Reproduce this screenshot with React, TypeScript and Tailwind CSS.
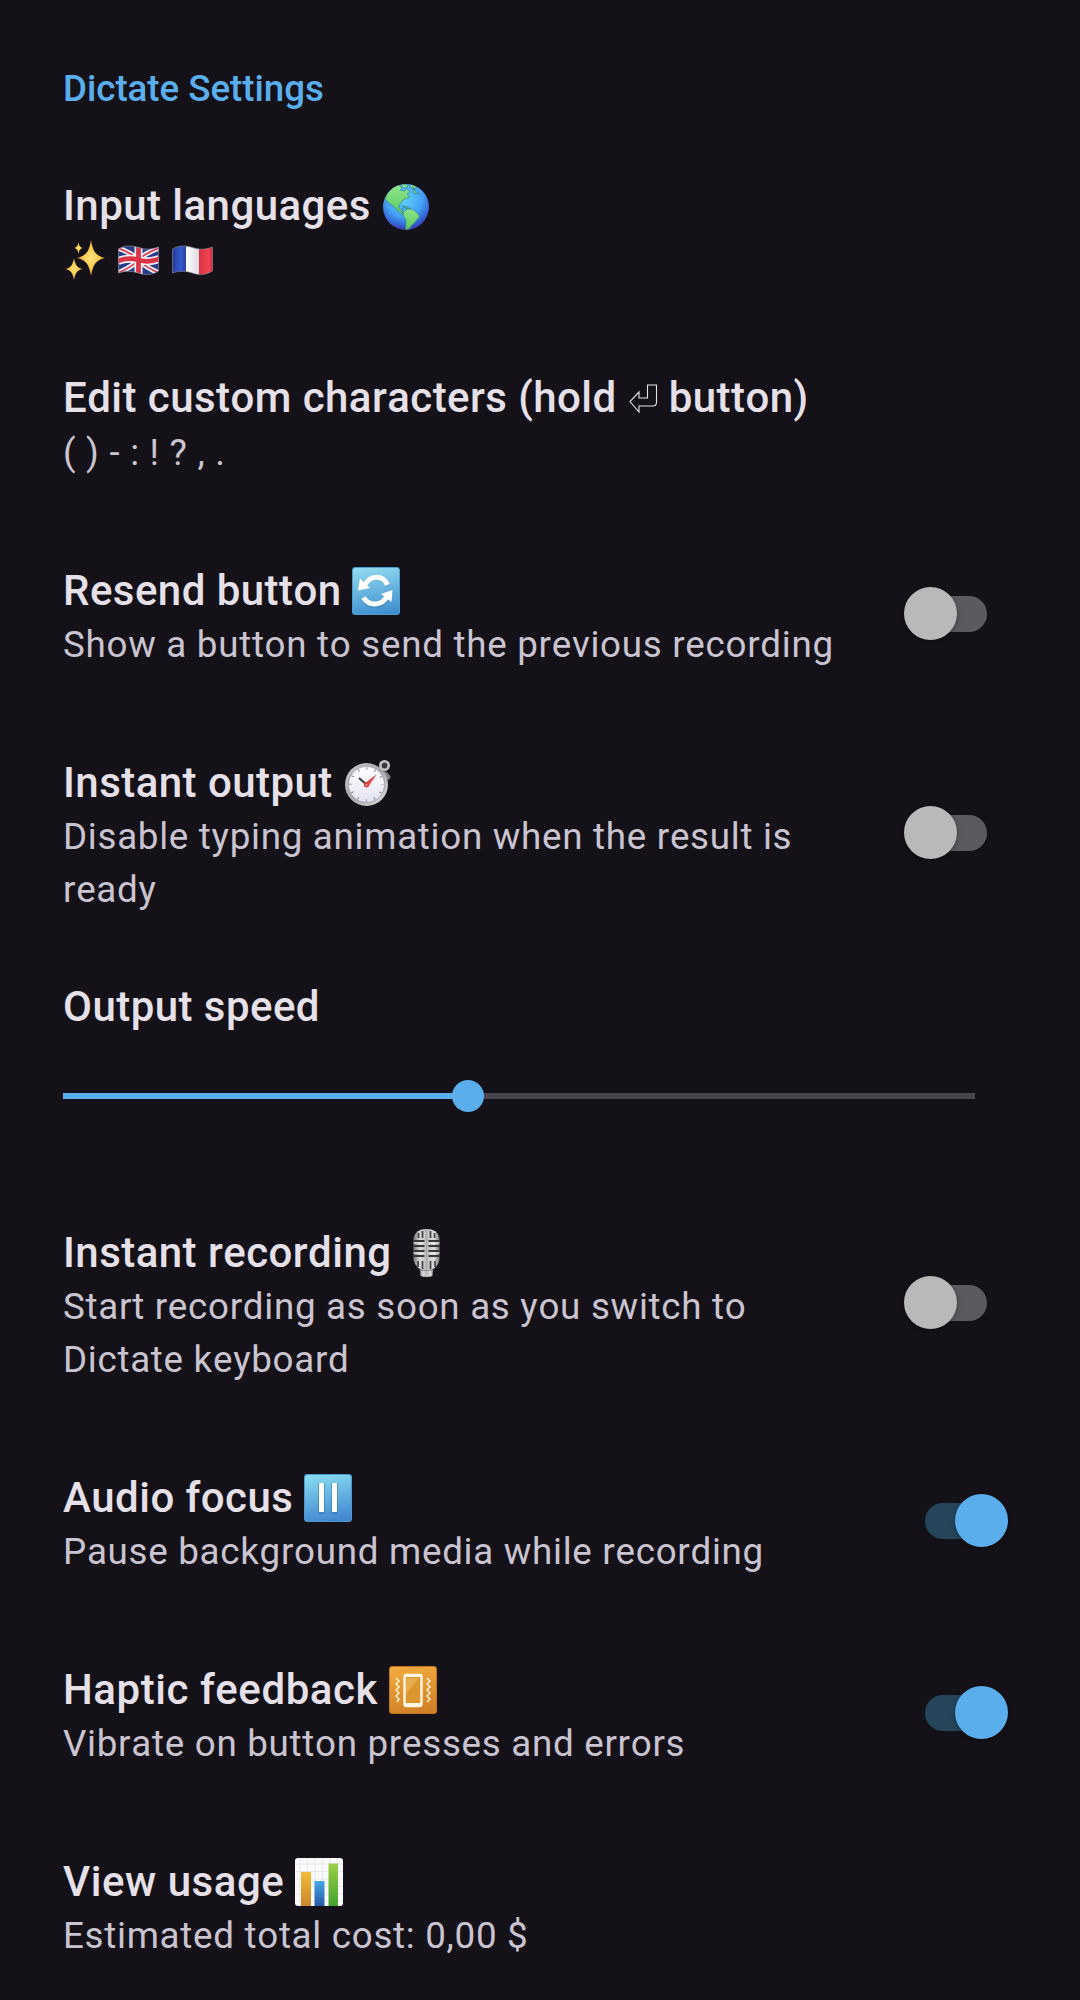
import type { ReactNode } from "react";

const ICON = "mt-[5px] h-12 w-12 shrink-0";

function Globe() {
  return (
    <svg className={ICON} viewBox="0 0 48 48">
      <defs>
        <radialGradient id="sea" cx="0.46" cy="0.32" r="0.65">
          <stop offset="0" stopColor="#5fd0ff" />
          <stop offset="0.6" stopColor="#45a3f5" />
          <stop offset="0.88" stopColor="#3567d8" />
          <stop offset="1" stopColor="#3b45b4" />
        </radialGradient>
        <linearGradient id="land" x1="0" y1="0" x2="0" y2="1">
          <stop offset="0" stopColor="#8fe58a" />
          <stop offset="1" stopColor="#58c75c" />
        </linearGradient>
        <clipPath id="disc"><circle cx="24" cy="24" r="23" /></clipPath>
      </defs>
      <circle cx="24" cy="24" r="23" fill="url(#sea)" />
      <g clipPath="url(#disc)" fill="url(#land)" stroke="#2f8590" strokeWidth="0.7">
        <path d="M3 16 C5 9 11 3 17 2 L20 5 18 7 22 8 25 6 28 9 25 11 28 14 25 15 21 17 19 20 17 22 17 25 19 27 21 25 20 29 24 31 25 33 21 32 16 28 11 23 6 19Z" />
        <path d="M18 2 L24 1 26 4 22 5ZM28 1 L35 4 32 6 29 5ZM20 23 L25 24 29 26 25 26ZM31 4 L34 9 38 11 32 10Z" />
        <path d="M24 27 C27 25 30 26 33 28 C34 30 38 31 37 35 C33 37 34 40 30 42 L27 46 24 47 C23 42 25 38 23 35 C20 33 21 29 24 27Z" />
      </g>
    </svg>
  );
}

function Tile({ id, from, to, edge, children }: { id: string; from: string; to: string; edge: string; children: ReactNode }) {
  return (
    <svg className={ICON} viewBox="0 0 48 48">
      <defs>
        <linearGradient id={id} x1="0.4" y1="0" x2="0.6" y2="1">
          <stop offset="0" stopColor={from} />
          <stop offset="1" stopColor={to} />
        </linearGradient>
      </defs>
      <rect x="0.5" y="0.5" width="47" height="47" rx="2.5" fill={`url(#${id})`} stroke={edge} />
      {children}
    </svg>
  );
}

function Refresh() {
  return (
    <Tile id="refresh" from="#8fd8ef" to="#3f8fd0" edge="#4a9cc9">
      <path d="M12 19C18 8 31 8 36 19M12 32C18 41 30 41 36 30" fill="none" stroke="#2f78ac" strokeWidth="5" opacity="0.4" />
      <path d="M12.500 18.500C18 7.500 31 7.500 35.500 18M11.500 30.500C17 39.500 30 39.500 35.500 28.500" fill="none" stroke="#fff" strokeWidth="5" />
      <path d="M8 11.500L6 23.500 18 21ZM40.500 23L29 27 39.500 35Z" fill="#fff" />
    </Tile>
  );
}

function Pause() {
  return (
    <Tile id="pause" from="#86d9f0" to="#4286d0" edge="#4c9acb">
      <path d="M14 9h7v31h-7zM27 9h7v31h-7z" fill="#2a72b0" opacity="0.45" />
      <path d="M15 9h5v29h-5zM28 9h5v29h-5z" fill="#fff" />
    </Tile>
  );
}

function Vibration() {
  return (
    <Tile id="vibration" from="#f0a93e" to="#d18025" edge="#bf761f">
      <rect x="15.500" y="9" width="17" height="31" rx="2" fill="#da962f" stroke="#fff7e3" strokeWidth="2.400" />
      <path d="M15 9.500h18M15 38.500h18" stroke="#fff7e3" strokeWidth="3" />
      <path d="M17 12h13L17 28z" fill="#f3c169" opacity="0.500" />
      <path d="M7 12l3 3-3 3 3 3-3 3 3 3-3 3 3 3-2 3M38 12l3 3-3 3 3 3-3 3 3 3-3 3 3 3-3 3" fill="none" stroke="#fff2d0" strokeWidth="1.500" />
    </Tile>
  );
}

function Stopwatch() {
  return (
    <svg className={ICON} viewBox="0 0 48 48">
      <defs>
        <linearGradient id="rim" x1="0" y1="0" x2="1" y2="1">
          <stop offset="0" stopColor="#c9c7ca" />
          <stop offset="0.5" stopColor="#aaa8ad" />
          <stop offset="1" stopColor="#e0dfe2" />
        </linearGradient>
        <linearGradient id="dial" x1="0" y1="0" x2="0" y2="1">
          <stop offset="0" stopColor="#fff" />
          <stop offset="1" stopColor="#e3e2f3" />
        </linearGradient>
      </defs>
      <path d="M36 12L39 9" stroke="#aaa" strokeWidth="5" />
      <circle cx="40.500" cy="6.500" r="4.200" fill="#3b393e" stroke="#c4c3c6" strokeWidth="2.600" />
      <path d="M41 15l3 3" stroke="#858389" strokeWidth="5" strokeLinecap="round" />
      <circle cx="22.500" cy="25.500" r="21.500" fill="url(#rim)" />
      <circle cx="22.500" cy="25.500" r="18" fill="url(#dial)" stroke="#8b898e" strokeWidth="0.600" />
      <circle cx="22.500" cy="25.500" r="16" fill="none" stroke="#717078" strokeWidth="2.600" strokeDasharray="0.800 7.578" strokeDashoffset="0.400" />
      <path d="M22.500 25.500L15 19" stroke="#37373b" strokeWidth="2" />
      <path d="M21 24L33 15 24 28Z" fill="#e54a49" />
      <circle cx="22.500" cy="25.800" r="2.600" fill="#df3f40" />
      <circle cx="22.500" cy="25.800" r="0.900" fill="#ffb5ae" />
    </svg>
  );
}

function Microphone() {
  return (
    <svg className={ICON} viewBox="0 0 48 48">
      <defs>
        <linearGradient id="steel" x1="0" y1="0" x2="1" y2="0">
          <stop offset="0" stopColor="#777" />
          <stop offset="0.25" stopColor="#d9d9d9" />
          <stop offset="0.5" stopColor="#bdbdbd" />
          <stop offset="0.8" stopColor="#dedede" />
          <stop offset="1" stopColor="#777" />
        </linearGradient>
      </defs>
      <g transform="translate(0.5 0)">
        <path d="M17 38h14l-1 9q-6 2-12 0z" fill="url(#steel)" />
        <path d="M18 41h12" stroke="#555" strokeWidth="1" />
        <path d="M11 9Q13 0 24 0T37 9V31Q35 41 24 41T11 31Z" fill="url(#steel)" />
        <path d="M16 4v5M20 2v7M28 2v7M32 4v5M15.500 32v6M20 32v8M28 32v8M32.500 32v6" stroke="#414141" strokeWidth="1.700" />
        <path d="M11 12h11M26 12h11M11 17h11M26 17h11M11 22h11M26 22h11M11 27h11M26 27h11" stroke="#373737" strokeWidth="2.100" />
        <path d="M11 14h10M27 14h10M11 24h10M27 24h10" stroke="#f4f4f4" strokeWidth="1.100" />
        <path d="M24 1v39" stroke="#aaa" strokeWidth="1.800" />
      </g>
    </svg>
  );
}

function BarChart() {
  return (
    <svg className={ICON} viewBox="0 0 48 48">
      <defs>
        <linearGradient id="bar-a" x1="0" y1="0" x2="0" y2="1"><stop stopColor="#f1bd38" /><stop offset="1" stopColor="#cd852c" /></linearGradient>
        <linearGradient id="bar-b" x1="0" y1="0" x2="0" y2="1"><stop stopColor="#43a7e8" /><stop offset="1" stopColor="#2859a4" /></linearGradient>
        <linearGradient id="bar-c" x1="0" y1="0" x2="0" y2="1"><stop stopColor="#9bd044" /><stop offset="1" stopColor="#43a02f" /></linearGradient>
      </defs>
      <rect width="48" height="48" rx="3" fill="#fbfbfc" />
      <path d="M5 0v48M12.500 0v48M20 0v48M27.500 0v48M35 0v48M42.500 0v48M0 6h48M0 13.500h48M0 21h48M0 28.500h48M0 36h48M0 43h48" stroke="#e4e5e8" strokeWidth="0.800" />
      <path d="M6 14h10v34H6z" fill="url(#bar-a)" />
      <path d="M19.500 23h10v25h-10z" fill="url(#bar-b)" />
      <path d="M33.500 5.500h9.500V48h-9.500z" fill="url(#bar-c)" />
    </svg>
  );
}

function Sparkles() {
  return (
    <svg className="mt-1.5 ml-[1px] h-[42px] w-[42px]" viewBox="0 0 42 42">
      <defs>
        <radialGradient id="gold"><stop stopColor="#ffe27b" /><stop offset="0.6" stopColor="#f8c84a" /><stop offset="1" stopColor="#c9862a" /></radialGradient>
      </defs>
      <g fill="url(#gold)">
        <path d="M27 0C29 11 31 15.500 41 18C31 20.500 29 25 27 36C25 25 23 20.500 13 18C23 15.500 25 11 27 0Z" />
        <path d="M10 18C11.500 25 12.500 27.500 19 29C12.500 30.500 11.500 33 10 40C8.500 33 7.500 30.500 1 29C7.500 27.500 8.500 25 10 18Z" />
        <path d="M14.500 2C15.200 6 16 7.200 19 8C16 8.800 15.200 10 14.500 14C13.800 10 13 8.800 10 8C13 7.200 13.800 6 14.500 2Z" />
      </g>
    </svg>
  );
}

const WAVE = "M0.500 4C7 0 14 0.500 20.500 2.500C28 5 34 4.500 40.500 2V26C34 30 28 30.500 20.500 28C14 26 7 25.500 0.500 28Z";

function FlagUK() {
  return (
    <svg className="mt-[11px] ml-[12px] h-[31px] w-[41px]" viewBox="0 0 41 31">
      <clipPath id="uk"><path d={WAVE} /></clipPath>
      <g clipPath="url(#uk)">
        <path d="M0 0h41v31H0z" fill="#273d87" />
        <path d="M0 3Q14 8 20.500 15T41 28M0 28Q14 22 20.500 15T41 3" fill="none" stroke="#f4f2f7" strokeWidth="5" />
        <path d="M0 3Q14 8 20.500 15T41 28M0 28Q14 22 20.500 15T41 3" fill="none" stroke="#d93b4e" strokeWidth="1.700" />
        <path d="M20.500 0v31M0 16Q10 12 20.500 15T41 14" fill="none" stroke="#f4f2f7" strokeWidth="8" />
        <path d="M20.500 0v31M0 16Q10 12 20.500 15T41 14" fill="none" stroke="#db3446" strokeWidth="4.800" />
      </g>
      <path d={WAVE} fill="none" stroke="#8e8da0" strokeWidth="0.700" />
    </svg>
  );
}

function FlagFrance() {
  return (
    <svg className="mt-[11px] ml-[13px] h-[31px] w-[41px]" viewBox="0 0 41 31">
      <defs>
        <linearGradient id="tricolour">
          <stop stopColor="#253a9d" /><stop offset="0.200" stopColor="#3559cc" /><stop offset="0.340" stopColor="#2741a7" />
          <stop offset="0.340" stopColor="#fff" /><stop offset="0.670" stopColor="#dcdbe1" />
          <stop offset="0.670" stopColor="#d83243" /><stop offset="0.900" stopColor="#f34450" /><stop offset="1" stopColor="#c92f3f" />
        </linearGradient>
      </defs>
      <path d={WAVE} fill="url(#tricolour)" stroke="#8e8da0" strokeWidth="0.600" />
    </svg>
  );
}

function ReturnKey() {
  return (
    <svg className="mr-[11px] ml-[12px] mt-[14px] h-[30px] w-[29px] shrink-0" viewBox="0 0 29 30" fill="none" stroke="#e6e0e9" strokeWidth="1.100">
      <path d="M18.500 1H27.500V18Q27.500 22 24 22H10V28L1 17.500 10 8V14H18.500Z" />
    </svg>
  );
}

function Switch({ on = false, tall = false }: { on?: boolean; tall?: boolean }) {
  return (
    <span role="switch" aria-checked={on} className={`relative h-[53px] w-[104px] shrink-0 ${tall ? "mb-[5px]" : "mb-[7px]"}`}>
      <span className={`absolute top-[9px] left-[21px] h-9 w-[62px] rounded-full ${on ? "bg-[#26455b]" : "bg-[#5b5a5e]"}`} />
      <span className={`absolute top-0 h-[53px] w-[53px] rounded-full shadow-[0_1px_4px_rgba(0,0,0,0.4)] ${on ? "left-[51px] bg-[#5aaeec]" : "left-0 bg-[#b9b9b9]"}`} />
    </span>
  );
}

function Title({ children, low }: { children: ReactNode; low?: boolean }) {
  return (
    <div className={`flex h-14 items-start text-[42px] font-medium tracking-[0.45px] whitespace-pre text-[#e6e0e9] ${low ? "leading-[58px]" : "leading-[56px]"}`}>
      {children}
    </div>
  );
}

function Row({ title, summary, control, low }: { title: ReactNode; summary: ReactNode; control?: ReactNode; low?: boolean }) {
  return (
    <section className="mb-[83px] flex items-center justify-between">
      <div>
        <Title low={low}>{title}</Title>
        <div className="min-h-[53px] text-[36.75px] leading-[53px] tracking-[0.71px] whitespace-nowrap text-[#cac4d0]">{summary}</div>
      </div>
      {control}
    </section>
  );
}

export default function App() {
  return (
    <main className="h-[2000px] w-[1080px] overflow-hidden bg-[#141218] pr-[72px] pl-[63px] font-['Roboto',sans-serif] [font-kerning:none]">
      <h1 className="mb-[64px] pt-[63px] text-[36.75px] leading-[51px] font-medium tracking-[-0.05px] text-[#5aaeec]">Dictate Settings</h1>
      <Row title={<><span>Input languages </span><Globe /></>} summary={<div className="flex h-[53px]"><Sparkles /><FlagUK /><FlagFrance /></div>} />
      <Row title={<><span>Edit custom characters (hold</span><ReturnKey /><span>button)</span></>} summary="( ) - : ! ? , ." />
      <Row low title={<><span>Resend button </span><Refresh /></>} summary="Show a button to send the previous recording" control={<Switch />} />
      <Row low title={<><span>Instant output </span><Stopwatch /></>} summary={<>Disable typing animation when the result is<br />ready</>} control={<Switch tall />} />
      <section className="-mt-[21px] mb-[112px]">
        <Title low>Output speed</Title>
        <div className="relative mt-[45px] h-[33px] w-[912px]">
          <div className="absolute top-[14px] h-[6px] w-full bg-[#48464c]" />
          <div className="absolute top-[14px] h-[6px] w-[405px] bg-[#5aaeec]" />
          <div className="absolute top-[1px] left-[389px] h-8 w-8 rounded-full bg-[#5aaeec]" />
        </div>
      </section>
      <Row low title={<><span>Instant recording </span><Microphone /></>} summary={<>Start recording as soon as you switch to<br />Dictate keyboard</>} control={<Switch tall />} />
      <Row low title={<><span>Audio focus </span><Pause /></>} summary="Pause background media while recording" control={<Switch on />} />
      <Row low title={<><span className="tracking-[0.55px]">Haptic feedback </span><Vibration /></>} summary="Vibrate on button presses and errors" control={<Switch on />} />
      <Row low title={<><span className="tracking-[0.55px]">View usage </span><BarChart /></>} summary="Estimated total cost: 0,00 $" />
    </main>
  );
}
